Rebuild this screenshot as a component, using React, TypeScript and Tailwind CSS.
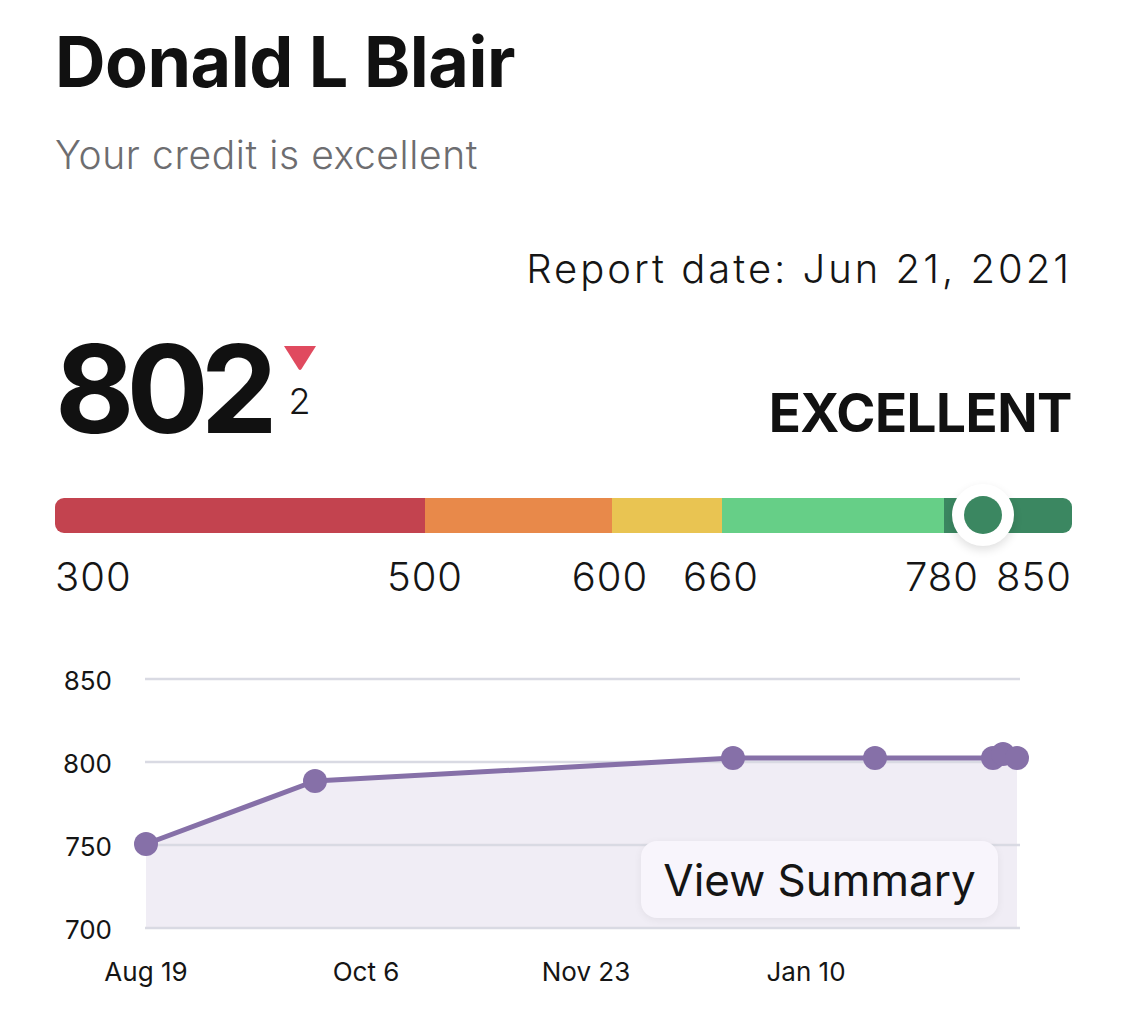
import React from 'react'

const font = { fontFamily: 'Inter, "Noto Sans", sans-serif' }

const segments = [
  'w-[370px] bg-[#c3434f]',
  'w-[187px] bg-[#e8894a]',
  'w-[110px] bg-[#e9c452]',
  'w-[222px] bg-[#66cf87]',
  'w-[128px] bg-[#3b8761]',
]

const points: [number, number][] = [
  [16, 183],
  [185, 120],
  [603, 97],
  [745, 97],
  [863, 97],
  [873, 93],
  [887, 97],
]

function Tick({ label, align = 'justify-center' }: { label: string; align?: string }) {
  return (
    <div className={`flex w-0 ${align}`}>
      <span className="whitespace-nowrap">{label}</span>
    </div>
  )
}

function ScoreBar() {
  return (
    <div className="mt-[59px]">
      <div className="relative">
        <div className="flex h-[35px] w-[1017px] overflow-hidden rounded-[9px]">
          {segments.map((c) => (
            <div key={c} className={c} />
          ))}
        </div>
        <div className="absolute left-[897px] top-[-14px] flex h-[62px] w-[62px] items-center justify-center rounded-full bg-white shadow-[0_4px_10px_rgba(0,0,0,0.12)]">
          <div className="h-[38px] w-[38px] rounded-full bg-[#3b8761]" />
        </div>
      </div>
      <div className="mt-[20px] flex h-[48px] text-[40px] font-light leading-[48px] tracking-[1px] text-[#151515]">
        <Tick label="300" align="justify-start" />
        <div className="w-[370px]" />
        <Tick label="500" />
        <div className="w-[185px]" />
        <Tick label="600" />
        <div className="w-[111px]" />
        <Tick label="660" />
        <div className="w-[221px]" />
        <Tick label="780" />
        <div className="w-[130px]" />
        <Tick label="850" align="justify-end" />
      </div>
    </div>
  )
}

function Chart() {
  const line = points.map((p) => p.join(',')).join(' ')
  const area = `16,267 ${line} 887,267`
  const grid = [18, 101, 184, 267]
  const yLabels = ['850', '800', '750', '700']
  const xLabels = ['Aug 19', 'Oct 6', 'Nov 23', 'Jan 10']
  return (
    <div className="relative mt-[60px] w-[1017px]">
      <div className="flex gap-[18px]">
        <div className="mt-[7px] flex h-[275px] w-[57px] flex-col items-end justify-between text-[26px] leading-[26px] text-[#151515]">
          {yLabels.map((l) => (
            <span key={l}>{l}</span>
          ))}
        </div>
        <svg width="900" height="280" viewBox="0 0 900 280">
          <polygon points={area} fill="#f0edf5" />
          {grid.map((y) => (
            <line key={y} x1="15" x2="890" y1={y} y2={y} stroke="#d9dae3" strokeWidth="2.5" />
          ))}
          <polyline points={line} fill="none" stroke="#8670a8" strokeWidth="5" strokeLinejoin="round" />
          {points.map(([x, y], i) => (
            <circle key={i} cx={x} cy={y} r="12" fill="#8670a8" />
          ))}
        </svg>
      </div>
      <div className="ml-[-19px] mt-[16px] flex text-[26px] leading-[26px] text-[#151515]">
        {xLabels.map((l) => (
          <div key={l} className="flex w-[220px] justify-center">
            {l}
          </div>
        ))}
      </div>
      <button className="absolute left-[586px] top-[180px] flex h-[77px] w-[357px] items-center justify-center rounded-[16px] bg-[#f8f5fc] text-[44px] text-[#151515] shadow-[0_2px_8px_rgba(0,0,0,0.06)]">
        View Summary
      </button>
    </div>
  )
}

export default function App() {
  return (
    <div className="min-h-[1014px] w-[1125px] bg-white pl-[55px] pt-[22px]" style={font}>
      <div className="w-[1017px]">
        <h1 className="text-[70px] font-bold leading-[80px] tracking-[-0.5px] text-[#111111]">Donald L Blair</h1>
        <p className="mt-[30px] text-[39px] font-light leading-[46px] tracking-[0.6px] text-[#6d6d70]">
          Your credit is excellent
        </p>
        <p className="mt-[67px] text-right text-[40px] font-light leading-[48px] tracking-[3px] text-[#151515]">
          Report date: Jun 21, 2021
        </p>
        <div className="mt-[46px] flex items-end justify-between">
          <div className="flex items-start">
            <span className="text-[122px] font-bold leading-[100px] tracking-[-8px] text-[#111111]">802</span>
            <div className="ml-[13px] mt-[6px] flex flex-col items-center">
              <svg width="34" height="26" viewBox="0 0 34 26">
                <path d="M1 1 H33 L18.5 24 Q17 26 15.5 24 Z" fill="#e04a5f" />
              </svg>
              <span className="mt-[12px] text-[36px] font-light leading-none text-[#151515]">2</span>
            </div>
          </div>
          <span className="mb-[-4px] text-[53px] font-bold leading-[60px] tracking-[-0.5px] text-[#111111]">EXCELLENT</span>
        </div>
        <ScoreBar />
        <Chart />
      </div>
    </div>
  )
}
